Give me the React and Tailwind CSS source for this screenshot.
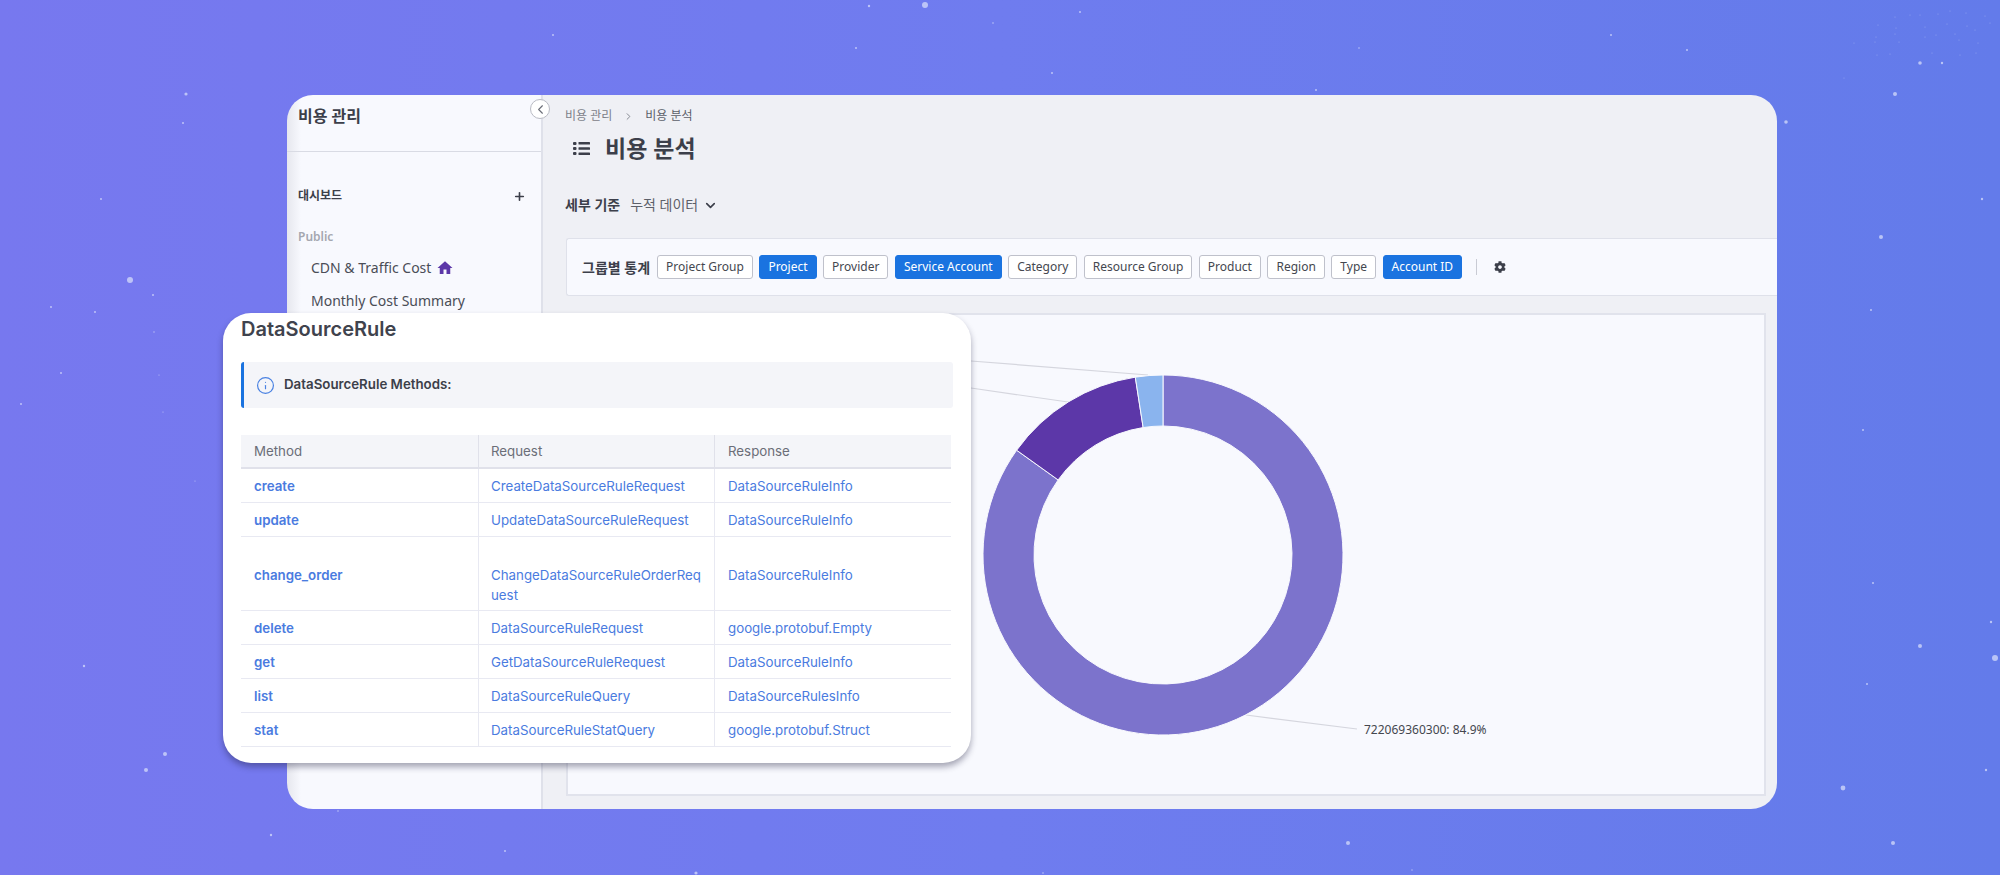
import { ChevronDown, ChevronLeft, ChevronRight, Info, Plus } from "lucide-react";
import { FaCog } from "react-icons/fa";
import { MdHome } from "react-icons/md";

const STARS = [
    [553, 35, 1], [186, 94, 1.6], [183, 123, 1], [101, 199, 1], [130, 280, 3], [153, 295, 1],
    [51, 307, 1], [95, 312, 1], [154, 332, 0.7], [61, 373, 1], [21, 404, 1], [159, 375, 0.6],
    [163, 412, 0.6], [195, 481, 0.6], [84, 666, 1.2], [165, 754, 2], [146, 770, 2], [271, 835, 1.2],
    [869, 6, 1.2], [925, 5, 3], [1080, 12, 1], [993, 23, 0.8], [856, 48, 1], [1359, 48, 0.8],
    [1052, 73, 1], [1316, 90, 1], [1611, 35, 1], [1687, 50, 1], [1920, 63, 1.8], [1942, 63, 1.2],
    [1895, 94, 2], [1786, 122, 1.8], [1982, 199, 1.2], [1881, 237, 2], [1871, 310, 1], [1863, 430, 1],
    [1873, 583, 1], [1991, 622, 1.2], [1920, 646, 2], [1995, 658, 3], [1867, 684, 1], [1986, 770, 1.2],
    [1843, 788, 2.4], [1893, 843, 2], [338, 811, 0.8], [505, 851, 1], [696, 873, 1.6], [1348, 843, 2],
    [1412, 870, 0.7], [1043, 873, 0.8],
];

// faint dots in the top right corner
const FAINT = [
    [1878, 25], [1895, 17], [1910, 15], [1920, 15], [1938, 14], [1950, 11], [1966, 13], [1985, 16],
    [1896, 28], [1925, 27], [1947, 24], [1967, 26], [1990, 23], [1876, 37], [1895, 34], [1925, 37],
    [1955, 34], [1975, 30], [1875, 42], [1899, 42], [1936, 35], [1959, 40], [1978, 43], [1877, 55],
    [1890, 54], [1932, 53], [1960, 55], [1976, 53], [1854, 43], [1844, 78],
];

const GROUPS = [
    ["Project Group", false],
    ["Project", true],
    ["Provider", false],
    ["Service Account", true],
    ["Category", false],
    ["Resource Group", false],
    ["Product", false],
    ["Region", false],
    ["Type", false],
    ["Account ID", true],
];

const METHODS = [
    ["create", "CreateDataSourceRuleRequest", "DataSourceRuleInfo"],
    ["update", "UpdateDataSourceRuleRequest", "DataSourceRuleInfo"],
    ["change_order", "ChangeDataSourceRuleOrderRequest", "DataSourceRuleInfo"],
    ["delete", "DataSourceRuleRequest", "google.protobuf.Empty"],
    ["get", "GetDataSourceRuleRequest", "DataSourceRuleInfo"],
    ["list", "DataSourceRuleQuery", "DataSourceRulesInfo"],
    ["stat", "DataSourceRuleStatQuery", "google.protobuf.Struct"],
];

// ring slice between two angles, degrees clockwise from the top
const slicePath = (from, to, cx = 1163, cy = 555, outer = 180, inner = 129) => {
    const pt = (r, deg) => {
        const a = (deg * Math.PI) / 180;
        return `${(cx + r * Math.sin(a)).toFixed(2)} ${(cy - r * Math.cos(a)).toFixed(2)}`;
    };
    const large = to - from > 180 ? 1 : 0;
    return `M${pt(outer, from)} A${outer} ${outer} 0 ${large} 1 ${pt(outer, to)} L${pt(inner, to)} A${inner} ${inner} 0 ${large} 0 ${pt(inner, from)} Z`;
};

const Sidebar = () => (
    <div className="w-[256px] shrink-0 border-r-2 border-[#dfe1ea] bg-[linear-gradient(90deg,#e6e7ee,#f8f9fe_14px)] font-['Noto_Sans','Noto_Sans_CJK_KR',sans-serif]">
        <div className="h-[57px] border-b border-[#d9dbe4] pt-[9px] pl-[11px] text-base leading-6 font-bold text-[#3c3f4a]">
            비용 관리
        </div>
        <div className="mt-[36px] flex h-4 items-center justify-between pr-[15px] pl-[11px] text-xs leading-4 font-bold text-[#3c3f4a]">
            <span>대시보드</span>
            <Plus size={13} strokeWidth={3} />
        </div>
        <div className="mt-[25px] pl-[11px] text-xs leading-4 font-semibold text-[#a5a7b0]">Public</div>
        <div className="mt-[13px] flex h-5 items-center gap-[5px] pl-[24px] text-[14px] leading-5 text-[#4a4d57]">
            <span>CDN &amp; Traffic Cost</span>
            <MdHome className="text-[#5c37a8]" size={18} />
        </div>
        <div className="mt-[13px] h-5 pl-[24px] text-[14px] leading-5 text-[#4a4d57]">Monthly Cost Summary</div>
    </div>
);

const MainArea = () => (
    <div className="min-w-0 flex-1 bg-[#eff0f5] pt-[13px] font-['Noto_Sans','Noto_Sans_CJK_KR',sans-serif]">
        <div className="flex h-4 items-center pl-[22px] text-xs leading-4 text-[#7d8089]">
            <span>비용 관리</span>
            <ChevronRight className="mr-[11px] ml-[11px]" size={11} />
            <span className="text-[#5c5f69]">비용 분석</span>
        </div>
        <div className="mt-[9px] flex h-[30px] items-center pl-[30px]">
            <svg width="17" height="15" viewBox="0 0 17 15" className="fill-[#3c3f4a]">
                <rect x="0" y="1" width="3.5" height="3" rx="1" />
                <rect x="5.5" y="1" width="11.5" height="2.6" rx="0.6" />
                <rect x="0" y="6" width="3.5" height="3" rx="1" />
                <rect x="5.5" y="6.2" width="11.5" height="2.6" rx="0.6" />
                <rect x="0" y="11" width="3.5" height="3" rx="1" />
                <rect x="5.5" y="11.4" width="11.5" height="2.6" rx="0.6" />
            </svg>
            <span className="ml-[15px] text-[23px] leading-[30px] font-bold text-[#3c3f4a]">비용 분석</span>
        </div>
        <div className="mt-[32px] flex h-5 items-center pl-[22px] text-[14px] leading-5">
            <span className="font-bold text-[#3c3f4a]">세부 기준</span>
            <span className="ml-[10px] text-[#5c5f69]">누적 데이터</span>
            <ChevronDown className="ml-[5px] text-[#3c3f4a]" size={15} strokeWidth={2.6} />
        </div>
        <div className="mt-[23px] ml-[23px] flex h-[58px] items-center rounded-l-[3px] border border-r-0 border-[#dfe1ea] bg-[#f8f9fe] pl-[15px]">
            <span className="mr-[7px] text-[14px] font-bold whitespace-nowrap text-[#3c3f4a]">그룹별 통계</span>
            <div className="flex items-center gap-[6.5px]">
                {GROUPS.map(([name, active]) => (
                    <div
                        key={name}
                        className={
                            active
                                ? "flex h-[24px] items-center rounded-[3px] border border-[#1a73e0] bg-[#1a73e0] px-2 text-xs whitespace-nowrap text-white"
                                : "flex h-[24px] items-center rounded-[3px] border border-[#bfc1cb] bg-white px-2 text-xs whitespace-nowrap text-[#44474f]"
                        }
                    >
                        {name}
                    </div>
                ))}
            </div>
            <div className="mr-[17px] ml-[14px] h-4 w-px bg-[#c9cbd4]" />
            <FaCog className="text-[#3c3f4a]" size={12} />
        </div>
        <div className="mt-[17px] mr-[11px] ml-[23px] h-[483px] border-2 border-[#e1e3ec] bg-[#f8f9fe]">
            <svg viewBox="568 315 1196 479" className="block h-full w-full">
                <path d="M971 361 L1148 375" stroke="#d5d6de" strokeWidth="1.2" fill="none" />
                <path d="M971 388 L1068 402" stroke="#d5d6de" strokeWidth="1.2" fill="none" />
                <path d="M1246 715 L1357 729" stroke="#d5d6de" strokeWidth="1.2" fill="none" />
                <path d={slicePath(0, 305.6)} fill="#7c73cc" stroke="#f8f9fe" strokeWidth="1" />
                <path d={slicePath(305.6, 351.15)} fill="#5c37a8" stroke="#f8f9fe" strokeWidth="1" />
                <path d={slicePath(351.15, 360)} fill="#8ab4ee" stroke="#f8f9fe" strokeWidth="1" />
                <text x="1364" y="734" fontSize="12" fill="#44474f">
                    722069360300: 84.9%
                </text>
            </svg>
        </div>
    </div>
);

const MethodCard = () => (
    <div className="absolute top-[313px] left-[223px] h-[450px] w-[748px] rounded-[28px] bg-white px-[18px] pt-[2px] font-['Inter',sans-serif] shadow-[0_4px_6px_rgba(30,30,60,0.38)]">
        <h2 className="text-[20px] leading-7 font-semibold text-[#3f434d]">DataSourceRule</h2>
        <div className="mt-[19px] flex h-[46px] items-center gap-[9px] rounded-[3px] border-l-[3px] border-[#1a73e0] bg-[#f4f5f9] pl-[12px]">
            <Info className="text-[#4a82e2]" size={19} strokeWidth={1.5} />
            <span className="text-[13.3px] font-semibold text-[#3c4049]">DataSourceRule Methods:</span>
        </div>
        <table className="mt-[27px] w-[710px] table-fixed border-separate border-spacing-0 text-[13.3px] leading-5">
            <thead>
                <tr className="bg-[#f4f5f9] text-left text-[#6b6e78]">
                    <th className="h-[34px] w-[238px] border-r border-b-2 border-[#e0e1ea] pl-[13px] font-normal">Method</th>
                    <th className="h-[34px] w-[236px] border-r border-b-2 border-[#e0e1ea] pl-[12px] font-normal">Request</th>
                    <th className="h-[34px] border-b-2 border-[#e0e1ea] pl-[13px] font-normal">Response</th>
                </tr>
            </thead>
            <tbody className="text-[#4a7be0]">
                {METHODS.map(([method, request, response]) => {
                    const pad = method === "change_order" ? "pt-[28px] pb-[5px] align-top" : "pt-[7px] pb-[6px]";
                    return (
                        <tr key={method}>
                            <td className={`border-r border-b border-[#e8e9f2] pl-[13px] font-semibold ${pad}`}>{method}</td>
                            <td className={`border-r border-b border-[#e8e9f2] pr-[9px] pl-[12px] break-all ${pad}`}>{request}</td>
                            <td className={`border-b border-[#e8e9f2] pl-[13px] ${pad}`}>{response}</td>
                        </tr>
                    );
                })}
            </tbody>
        </table>
    </div>
);

const App = () => {
    return (
        <div className="relative h-[875px] w-[2000px] overflow-hidden bg-linear-to-r from-[#7778ef] via-[#6f7cef] to-[#637bea] pt-[95px] pl-[287px]">
            {/* Stars */}
            <svg className="absolute inset-0" width="2000" height="875">
                {STARS.map(([x, y, r], i) => (
                    <circle key={i} cx={x} cy={y} r={r} fill="#d5dcfa" opacity="0.75" />
                ))}
                {FAINT.map(([x, y], i) => (
                    <circle key={i} cx={x} cy={y} r="0.6" fill="#d5dcfa" opacity="0.4" />
                ))}
            </svg>

            {/* App window */}
            <div className="relative flex h-[714px] w-[1490px]">
                <div className="flex h-full w-full overflow-hidden rounded-[26px]">
                    <Sidebar />
                    <MainArea />
                </div>
                <div className="absolute top-[4px] left-[243px] flex h-5 w-5 items-center justify-center rounded-full border border-[#b9bbc4] bg-white">
                    <ChevronLeft className="text-[#6b6e78]" size={15} strokeWidth={1.8} />
                </div>
            </div>

            <MethodCard />
        </div>
    );
};

export default App;
